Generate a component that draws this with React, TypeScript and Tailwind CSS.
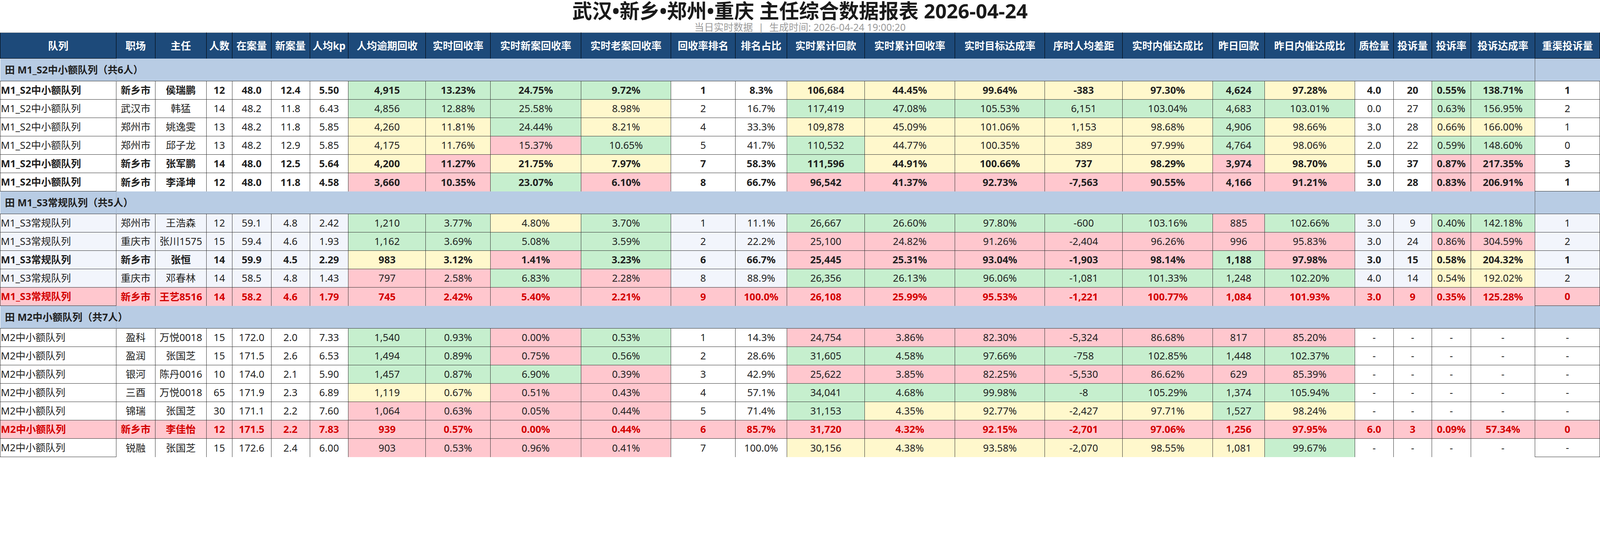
const columns = [
  { title: "队列", width: "w-[7.25%]" },
  { title: "职场", width: "w-[2.4375%]" },
  { title: "主任", width: "w-[3.2083%]" },
  { title: "人数", width: "w-[1.6042%]" },
  { title: "在案量", width: "w-[2.4375%]" },
  { title: "新案量", width: "w-[2.4167%]" },
  { title: "人均kp", width: "w-[2.4167%]" },
  { title: "人均逾期回收", width: "w-[4.8333%]" },
  { title: "实时回收率", width: "w-[4.0417%]" },
  { title: "实时新案回收率", width: "w-[5.6667%]" },
  { title: "实时老案回收率", width: "w-[5.625%]" },
  { title: "回收率排名", width: "w-[4.0208%]" },
  { title: "排名占比", width: "w-[3.2292%]" },
  { title: "实时累计回款", width: "w-[4.8542%]" },
  { title: "实时累计回收率", width: "w-[5.6458%]" },
  { title: "实时目标达成率", width: "w-[5.625%]" },
  { title: "序时人均差距", width: "w-[4.8542%]" },
  { title: "实时内催达成比", width: "w-[5.6458%]" },
  { title: "昨日回款", width: "w-[3.2292%]" },
  { title: "昨日内催达成比", width: "w-[5.6458%]" },
  { title: "质检量", width: "w-[2.4167%]" },
  { title: "投诉量", width: "w-[2.3958%]" },
  { title: "投诉率", width: "w-[2.4375%]" },
  { title: "投诉达成率", width: "w-[4.0208%]" },
  { title: "重渠投诉量", width: "w-[4.0417%]" },
];

// g = 绿, y = 黄, p = 红
const tones: Record<string, string> = {
  g: "bg-[#c6efce]",
  y: "bg-[#fff8cc]",
  p: "bg-[#ffc7ce]",
};

const dash = ["-", "-", "-", "-", "-"];

const groups = [
  {
    title: "田 M1_S2中小额队列（共6人）",
    tinted: false,
    rows: [
      {
        style: "b",
        cells: ["M1_S2中小额队列", "新乡市", "侯瑞鹏", "12", "48.0", "12.4", "5.50", "4,915|g", "13.23%|g", "24.75%|g", "9.72%|g", "1", "8.3%", "106,684|y", "44.45%|y", "99.64%|y", "-383|y", "97.30%|y", "4,624|g", "97.28%|y", "4.0", "20", "0.55%|g", "138.71%|g", "1"],
      },
      {
        style: "",
        cells: ["M1_S2中小额队列", "武汉市", "韩猛", "14", "48.2", "11.8", "6.43", "4,856|g", "12.88%|g", "25.58%|g", "8.98%|y", "2", "16.7%", "117,419|g", "47.08%|g", "105.53%|g", "6,151|g", "103.04%|g", "4,683|g", "103.01%|g", "0.0", "27", "0.63%|g", "156.95%|g", "2"],
      },
      {
        style: "",
        cells: ["M1_S2中小额队列", "郑州市", "姚逸雯", "13", "48.2", "11.8", "5.85", "4,260|y", "11.81%|y", "24.44%|g", "8.21%|y", "4", "33.3%", "109,878|y", "45.09%|y", "101.06%|y", "1,153|y", "98.68%|y", "4,906|g", "98.66%|y", "3.0", "28", "0.66%|y", "166.00%|y", "1"],
      },
      {
        style: "",
        cells: ["M1_S2中小额队列", "郑州市", "邱子龙", "13", "48.2", "12.9", "5.85", "4,175|y", "11.76%|y", "15.37%|p", "10.65%|g", "5", "41.7%", "110,532|g", "44.77%|y", "100.35%|y", "389|y", "97.99%|y", "4,764|g", "98.06%|y", "2.0", "22", "0.59%|g", "148.60%|g", "0"],
      },
      {
        style: "b",
        cells: ["M1_S2中小额队列", "新乡市", "张军鹏", "14", "48.0", "12.5", "5.64", "4,200|y", "11.27%|p", "21.75%|y", "7.97%|y", "7", "58.3%", "111,596|g", "44.91%|y", "100.66%|y", "737|y", "98.29%|y", "3,974|p", "98.70%|y", "5.0", "37", "0.87%|p", "217.35%|p", "3"],
      },
      {
        style: "b",
        cells: ["M1_S2中小额队列", "新乡市", "李泽坤", "12", "48.0", "11.8", "4.58", "3,660|p", "10.35%|p", "23.07%|g", "6.10%|p", "8", "66.7%", "96,542|p", "41.37%|p", "92.73%|p", "-7,563|p", "90.55%|p", "4,166|p", "91.21%|p", "3.0", "28", "0.83%|p", "206.91%|p", "1"],
      },
    ],
  },
  {
    title: "田 M1_S3常规队列（共5人）",
    tinted: true,
    rows: [
      {
        style: "",
        cells: ["M1_S3常规队列", "郑州市", "王浩森", "12", "59.1", "4.8", "2.42", "1,210|g", "3.77%|g", "4.80%|y", "3.70%|g", "1", "11.1%", "26,667|g", "26.60%|g", "97.80%|g", "-600|g", "103.16%|g", "885|p", "102.66%|g", "3.0", "9", "0.40%|g", "142.18%|g", "1"],
      },
      {
        style: "",
        cells: ["M1_S3常规队列", "重庆市", "张川1575", "15", "59.4", "4.6", "1.93", "1,162|g", "3.69%|g", "5.08%|g", "3.59%|g", "2", "22.2%", "25,100|p", "24.82%|p", "91.26%|p", "-2,404|p", "96.26%|p", "996|p", "95.83%|p", "3.0", "24", "0.86%|p", "304.59%|p", "2"],
      },
      {
        style: "b",
        cells: ["M1_S3常规队列", "新乡市", "张恒", "14", "59.9", "4.5", "2.29", "983|y", "3.12%|y", "1.41%|p", "3.23%|g", "6", "66.7%", "25,445|p", "25.31%|p", "93.04%|p", "-1,903|p", "98.14%|p", "1,188|g", "97.98%|p", "3.0", "15", "0.58%|y", "204.32%|y", "1"],
      },
      {
        style: "",
        cells: ["M1_S3常规队列", "重庆市", "邓春林", "14", "58.5", "4.8", "1.43", "797|p", "2.58%|p", "6.83%|g", "2.28%|p", "8", "88.9%", "26,356|g", "26.13%|g", "96.06%|g", "-1,081|g", "101.33%|g", "1,248|g", "102.20%|g", "4.0", "14", "0.54%|y", "192.02%|y", "2"],
      },
      {
        style: "r",
        cells: ["M1_S3常规队列", "新乡市", "王艺8516", "14", "58.2", "4.6", "1.79", "745", "2.42%", "5.40%", "2.21%", "9", "100.0%", "26,108", "25.99%", "95.53%", "-1,221", "100.77%", "1,084", "101.93%", "3.0", "9", "0.35%", "125.28%", "0"],
      },
    ],
  },
  {
    title: "田 M2中小额队列（共7人）",
    tinted: false,
    rows: [
      {
        style: "",
        cells: ["M2中小额队列", "盈科", "万悦0018", "15", "172.0", "2.0", "7.33", "1,540|g", "0.93%|g", "0.00%|p", "0.53%|g", "1", "14.3%", "24,754|p", "3.86%|p", "82.30%|p", "-5,324|p", "86.68%|p", "817|p", "85.20%|p", ...dash],
      },
      {
        style: "",
        cells: ["M2中小额队列", "盈润", "张国芝", "15", "171.5", "2.6", "6.53", "1,494|g", "0.89%|g", "0.75%|p", "0.56%|g", "2", "28.6%", "31,605|g", "4.58%|g", "97.66%|g", "-758|g", "102.85%|g", "1,448|g", "102.37%|g", ...dash],
      },
      {
        style: "",
        cells: ["M2中小额队列", "银河", "陈丹0016", "10", "174.0", "2.1", "5.90", "1,457|g", "0.87%|g", "6.90%|g", "0.39%|p", "3", "42.9%", "25,622|p", "3.85%|p", "82.25%|p", "-5,530|p", "86.62%|p", "629|p", "85.39%|p", ...dash],
      },
      {
        style: "",
        cells: ["M2中小额队列", "三酉", "万悦0018", "65", "171.9", "2.3", "6.89", "1,119|y", "0.67%|y", "0.51%|p", "0.43%|p", "4", "57.1%", "34,041|g", "4.68%|g", "99.98%|g", "-8|g", "105.29%|g", "1,374|g", "105.94%|g", ...dash],
      },
      {
        style: "",
        cells: ["M2中小额队列", "锦瑞", "张国芝", "30", "171.1", "2.2", "7.60", "1,064|p", "0.63%|p", "0.05%|p", "0.44%|p", "5", "71.4%", "31,153|g", "4.35%|y", "92.77%|y", "-2,427|y", "97.71%|y", "1,527|g", "98.24%|y", ...dash],
      },
      {
        style: "r",
        cells: ["M2中小额队列", "新乡市", "李佳怡", "12", "171.5", "2.2", "7.83", "939", "0.57%", "0.00%", "0.44%", "6", "85.7%", "31,720", "4.32%", "92.15%", "-2,701", "97.06%", "1,256", "97.95%", "6.0", "3", "0.09%", "57.34%", "0"],
      },
      {
        style: "",
        cells: ["M2中小额队列", "锐融", "张国芝", "15", "172.6", "2.4", "6.00", "903|p", "0.53%|p", "0.96%|p", "0.41%|p", "7", "100.0%", "30,156|y", "4.38%|y", "93.58%|y", "-2,070|y", "98.55%|y", "1,081|y", "99.67%|g", ...dash],
      },
    ],
  },
];

type Row = { style: string; cells: string[] };

const DataRow = ({ row, tinted }: { row: Row; tinted: boolean }) => {
  const red = row.style === "r";
  const base = red ? "bg-[#ffc7ce]" : tinted ? "bg-[#f2f5fc]" : "bg-white";
  const text = red ? "text-[#d40000] font-bold" : row.style === "b" ? "text-[#1f1f1f] font-bold" : "text-[#1f1f1f]";

  return (
    <tr className="h-[47px]">
      {row.cells.map((cell, i) => {
        const [value, tone] = cell.split("|");
        const bg = !red && tone ? tones[tone] : base;
        const edge = i === 0 || i === row.cells.length - 1;
        return (
          <td
            key={i}
            className={`p-0 whitespace-nowrap border-x border-t-[1.5px] border-[#333] ${edge ? "border-b" : ""} ${bg} ${text} ${
              i === 0 ? "text-left pl-px" : "text-center"
            }`}
          >
            {value}
          </td>
        );
      })}
    </tr>
  );
};

const App = () => {
  return (
    <div className="w-full bg-white font-['Noto_Sans','Noto_Sans_CJK_SC',sans-serif]">
      {/* 标题 */}
      <div className="flex flex-col items-center">
        <h1 className="text-[51px] leading-[55px] font-bold text-[#1a1a1a]">武汉•新乡•郑州•重庆 主任综合数据报表 2026-04-24</h1>
        <p className="text-[25px] leading-[28px] text-[#9a9a9a]">
          当日实时数据<span className="mx-[14px]">|</span>生成时间: 2026-04-24 19:00:20
        </p>
      </div>

      <table className="w-full table-fixed border-collapse text-[25.5px] leading-none">
        <colgroup>
          {columns.map((col) => (
            <col key={col.title} className={col.width} />
          ))}
        </colgroup>
        <thead>
          <tr className="h-[66px] bg-[#1d4a7a]">
            {columns.map((col, i) => (
              <th
                key={col.title}
                className={`p-0 whitespace-nowrap text-[26px] font-bold text-white border-x border-t-[1.5px] border-x-black border-t-[#a8a8a8] ${
                  i === 0 || i === columns.length - 1 ? "border-b border-b-black" : ""
                }`}
              >
                {col.title}
              </th>
            ))}
          </tr>
        </thead>
        <tbody>
          {groups.map((group) => (
            <>
              <tr key={group.title} className="h-[58px] bg-[#b8cce4]">
                <td className="p-0 pl-[12px] whitespace-nowrap text-left text-[25.5px] font-bold text-[#1f1f1f] border-r border-[#9fb2ca]">
                  <span className="relative z-10">{group.title}</span>
                </td>
                <td colSpan={23} className="p-0"></td>
                <td className="p-0 border-l border-[#555]"></td>
              </tr>
              {group.rows.map((row) => (
                <DataRow key={row.cells[2]} row={row} tinted={group.tinted} />
              ))}
            </>
          ))}
        </tbody>
      </table>
    </div>
  );
};

export default App;
